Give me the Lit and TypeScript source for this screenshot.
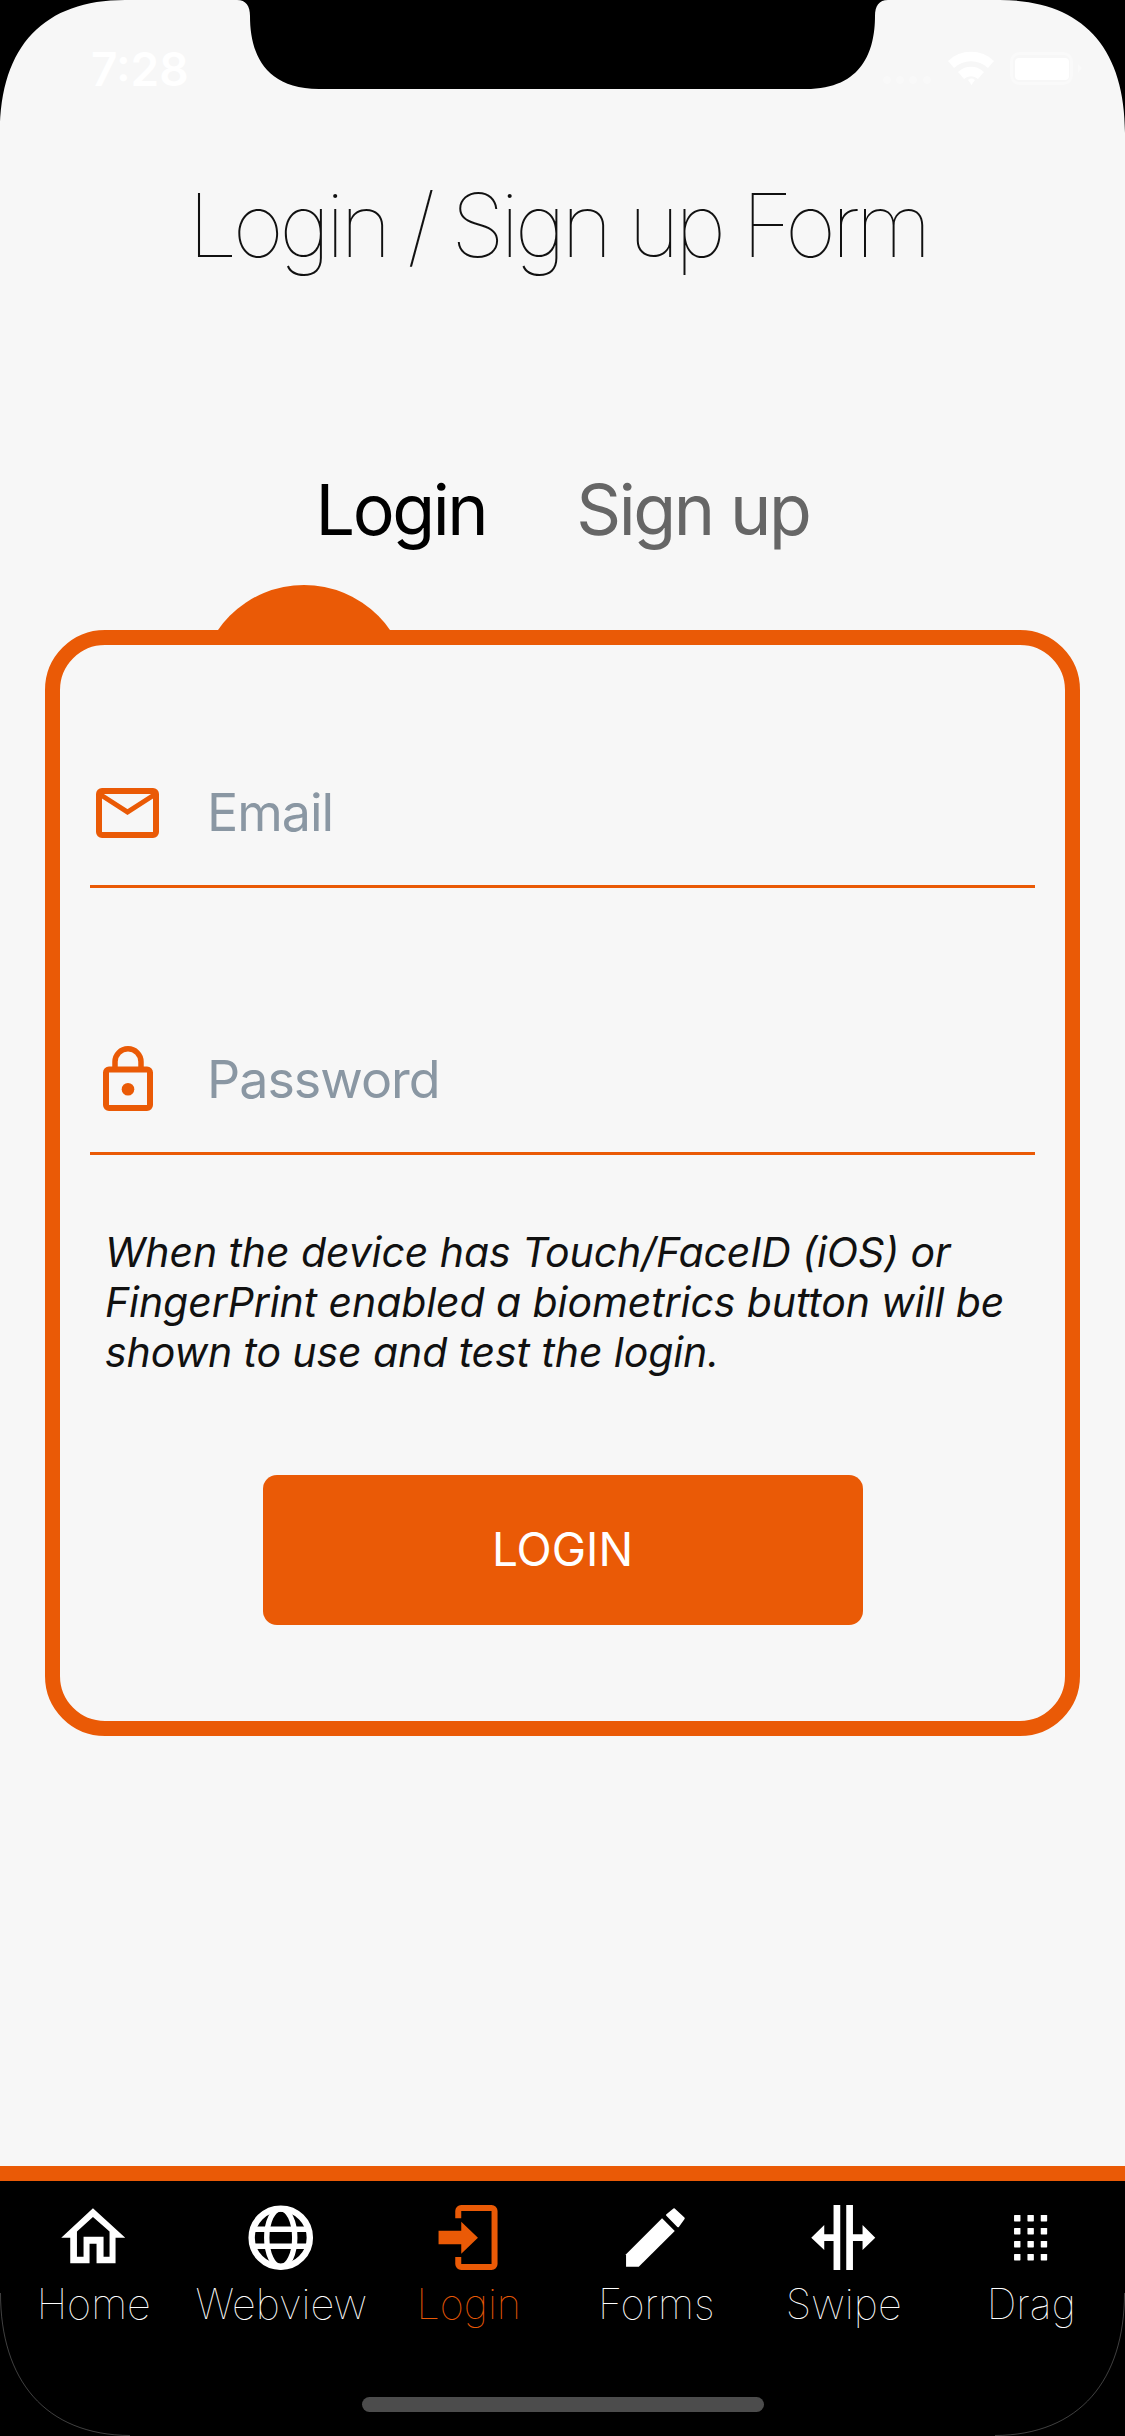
import { LitElement, html, css, svg } from 'lit';
import { customElement } from 'lit/decorators.js';

const tabs = [
  {
    label: 'Home',
    box: '-1.25 5 90 70',
    art: svg`<path fill-rule="evenodd" d="M42.7 13.3 75 42.7H65.3V68.3H46.3V48.7H39.3V68.3H20V42.7H11ZM42.7 22 26.7 36.5V61.7H33.3V41.7H53.3V61.7H59.3V36.5Z"/>`,
  },
  {
    label: 'Webview',
    box: '186.25 5 90 70',
    art: svg`<g fill="none" stroke="currentColor"><circle cx="231" cy="42.7" r="29.1" stroke-width="6.4"/><ellipse cx="231" cy="42.7" rx="14" ry="29" stroke-width="5.4"/><path d="M204 34.2H258M204 51.2H258" stroke-width="5.4"/></g>`,
  },
  {
    label: 'Login',
    box: '-1.25 5 90 70',
    active: true,
    art: svg`<path d="M33 23.3V16a3 3 0 0 1 3-3H66.3a3 3 0 0 1 3 3V69a3 3 0 0 1-3 3H36a3 3 0 0 1-3-3V62" fill="none" stroke="currentColor" stroke-width="6"/><path d="M13.3 35.7H36V26.7L52.7 42.7 36 58.7V49.3H13.3Z"/>`,
  },
  {
    label: 'Forms',
    box: '186.25 5 90 70',
    art: svg`<path d="M201.3 59.3 237.3 23.3 250 36 214 71.7H201.3Z"/><path d="M242.3 20 249.3 14.3 259 23.3 253.3 31.3Z" stroke="currentColor" stroke-width="2" stroke-linejoin="round"/>`,
  },
  {
    label: 'Swipe',
    box: '-1.25 5 90 70',
    art: svg`<path d="M33.3 10H40V75H33.3ZM46 10H52.7V75H46ZM11 42.7 24 30V39.3H33.3V46H24V55ZM75 42.7 62.3 30V39.3H52.7V46H62.3V55Z"/>`,
  },
  {
    label: 'Drag',
    box: '186.25 5 90 70',
    art: svg`${[20, 33, 46, 59].map((y) =>
      [214.3, 227.7, 241].map((x) => svg`<rect x=${x} y=${y} width="6.4" height="6.4" rx="0.6"/>`)
    )}`,
  },
];

@customElement('app-root')
export class AppRoot extends LitElement {
  static styles = css`
    :host {
      display: block;
      position: relative;
      width: 1125px;
      height: 2436px;
      overflow: hidden;
      background: #f7f7f7;
      font-family: Inter, 'Liberation Sans', sans-serif;
    }
    .screen {
      display: flex;
      flex-direction: column;
      height: 2436px;
    }
    .status {
      display: flex;
      align-items: flex-start;
      height: 175px;
      padding: 0 40px 0 91px;
      box-sizing: border-box;
      color: #fff;
    }
    .time {
      flex: 1;
      margin-top: 42px;
      font-size: 46px;
      line-height: 54px;
      font-weight: 600;
    }
    .status svg {
      margin-top: 50px;
      display: block;
    }
    h1 {
      margin: 0;
      padding-right: 10px;
      text-align: center;
      font-weight: 100;
      font-size: 88px;
      line-height: 100px;
      letter-spacing: -4.6px;
      color: #111;
    }
    .tabs {
      display: flex;
      justify-content: center;
      gap: 90px;
      margin: 190px 0 75px;
      font-size: 70px;
      line-height: 90px;
      letter-spacing: -2.4px;
    }
    .tabs .on {
      color: #000;
    }
    .tabs .off {
      color: #666;
    }
    .wrap {
      position: relative;
      margin: 0 45px;
    }
    .bump {
      position: absolute;
      left: 154px;
      top: -45px;
      width: 210px;
      height: 210px;
      border-radius: 50%;
      background: #ea5a06;
    }
    .card {
      position: relative;
      box-sizing: border-box;
      border: 15px solid #ea5a06;
      border-radius: 60px;
      background: #f7f7f7;
      padding: 135px 30px 96px;
    }
    .field {
      display: flex;
      align-items: center;
      gap: 42px;
      height: 66px;
      padding-bottom: 39px;
      border-bottom: 3px solid #ea5a06;
      font-size: 52px;
      line-height: 66px;
      letter-spacing: -1px;
      color: #8a97a3;
    }
    .field + .field {
      margin-top: 159px;
    }
    .slot {
      width: 75px;
      display: flex;
      justify-content: center;
    }
    .slot svg {
      display: block;
      color: #ea5a06;
    }
    .slot .lock {
      margin-top: -3px;
    }
    .help {
      margin: 72px 0 0 15px;
      font-size: 41px;
      line-height: 50px;
      letter-spacing: -0.1px;
      font-style: italic;
      color: #111;
    }
    .btn {
      display: flex;
      align-items: center;
      justify-content: center;
      width: 600px;
      height: 150px;
      margin: 98px auto 0;
      padding-bottom: 2px;
      box-sizing: border-box;
      border-radius: 14px;
      background: #ea5a06;
      color: #fff;
      font-size: 46px;
    }
    .spacer {
      flex: 1;
    }
    .bar {
      display: grid;
      grid-template-columns: repeat(6, 1fr);
      box-sizing: border-box;
      height: 270px;
      padding-top: 19px;
      border-top: 15px solid #ea5a06;
      background: #000;
      font-weight: 100;
      font-size: 41.5px;
      line-height: 50px;
      color: #fff;
      text-align: center;
    }
    .item svg {
      display: block;
      margin: 0 auto 9px;
      fill: currentColor;
    }
    .item.active {
      color: #ea5a06;
    }
    .pill {
      position: absolute;
      left: 362px;
      top: 2397px;
      width: 402px;
      height: 15px;
      border-radius: 8px;
      background: #4c4c4c;
    }
    .frame {
      position: absolute;
      left: 0;
      top: 0;
      pointer-events: none;
    }
  `;

  render() {
    return html`
      <div class="screen">
        <div class="status">
          <span class="time">7:28</span>
          <svg width="210" height="36" viewBox="0 0 210 36" fill="#fff">
            <g opacity="0.3">
              <circle cx="12" cy="30" r="4" /><circle cx="25" cy="30" r="4" /><circle cx="38" cy="30" r="4" /><circle cx="52" cy="30" r="4" />
            </g>
            <path d="M73 11A33 33 0 0 1 119 11L113 18A25 25 0 0 0 79 18ZM83 22A19 19 0 0 1 109 22L103 29A10 10 0 0 0 89 29ZM93 30A5 5 0 0 1 100 30L96.500 35Z" />
            <rect x="136.500" y="3.500" width="60" height="30" rx="8" fill="none" stroke="#fff" stroke-width="3" opacity="0.35" />
            <rect x="140" y="8" width="54" height="22" rx="4" />
            <path d="M203 14 207 18 203 23Z" opacity="0.35" />
          </svg>
        </div>
        <h1>Login / Sign up Form</h1>
        <div class="tabs"><span class="on">Login</span><span class="off">Sign up</span></div>
        <div class="wrap">
          <div class="bump"></div>
          <div class="card">
            <div class="field">
              <span class="slot">
                <svg width="63" height="50" viewBox="0 0 63 50" fill="none" stroke="currentColor">
                  <rect x="3" y="3" width="57" height="44" rx="3" stroke-width="6" />
                  <path d="M5 7 31.500 24 58 7" stroke-width="5" />
                </svg>
              </span>
              <span>Email</span>
            </div>
            <div class="field">
              <span class="slot">
                <svg class="lock" width="50" height="65" viewBox="0 0 50 65" fill="none" stroke="currentColor">
                  <rect x="3" y="23.500" width="44" height="38.500" rx="3" stroke-width="6" />
                  <path d="M12 22V15.800a13 13 0 0 1 26 0V22" stroke-width="5.500" />
                  <circle cx="25" cy="43.300" r="6.300" fill="currentColor" stroke="none" />
                </svg>
              </span>
              <span>Password</span>
            </div>
            <p class="help">When the device has Touch/FaceID (iOS) or FingerPrint enabled a biometrics button will be shown to use and test the login.</p>
            <div class="btn">LOGIN</div>
          </div>
        </div>
        <div class="spacer"></div>
        <nav class="bar">
          ${tabs.map(
            (t) => html`
              <div class="item ${t.active ? 'active' : ''}">
                <svg width="90" height="70" viewBox=${t.box}>${t.art}</svg>
                <div>${t.label}</div>
              </div>
            `
          )}
        </nav>
      </div>
      <div class="pill"></div>
      <svg class="frame" width="1125" height="2436" viewBox="0 0 1125 2436">
        <path d="M0 0H125C45 0 0 45 0 133ZM1125 0H1000C1080 0 1125 45 1125 133ZM237 0C246 0 250 6 250 16C250 50 262 89 319 89H806C863 89 875 50 875 16C875 6 879 0 888 0Z" fill="#000" />
        <path d="M0.500 2293C0.500 2380 45 2435 130 2435.500M1124.500 2293C1124.500 2380 1080 2435 995 2435.500" fill="none" stroke="#fff" stroke-opacity="0.25" />
      </svg>
    `;
  }
}
